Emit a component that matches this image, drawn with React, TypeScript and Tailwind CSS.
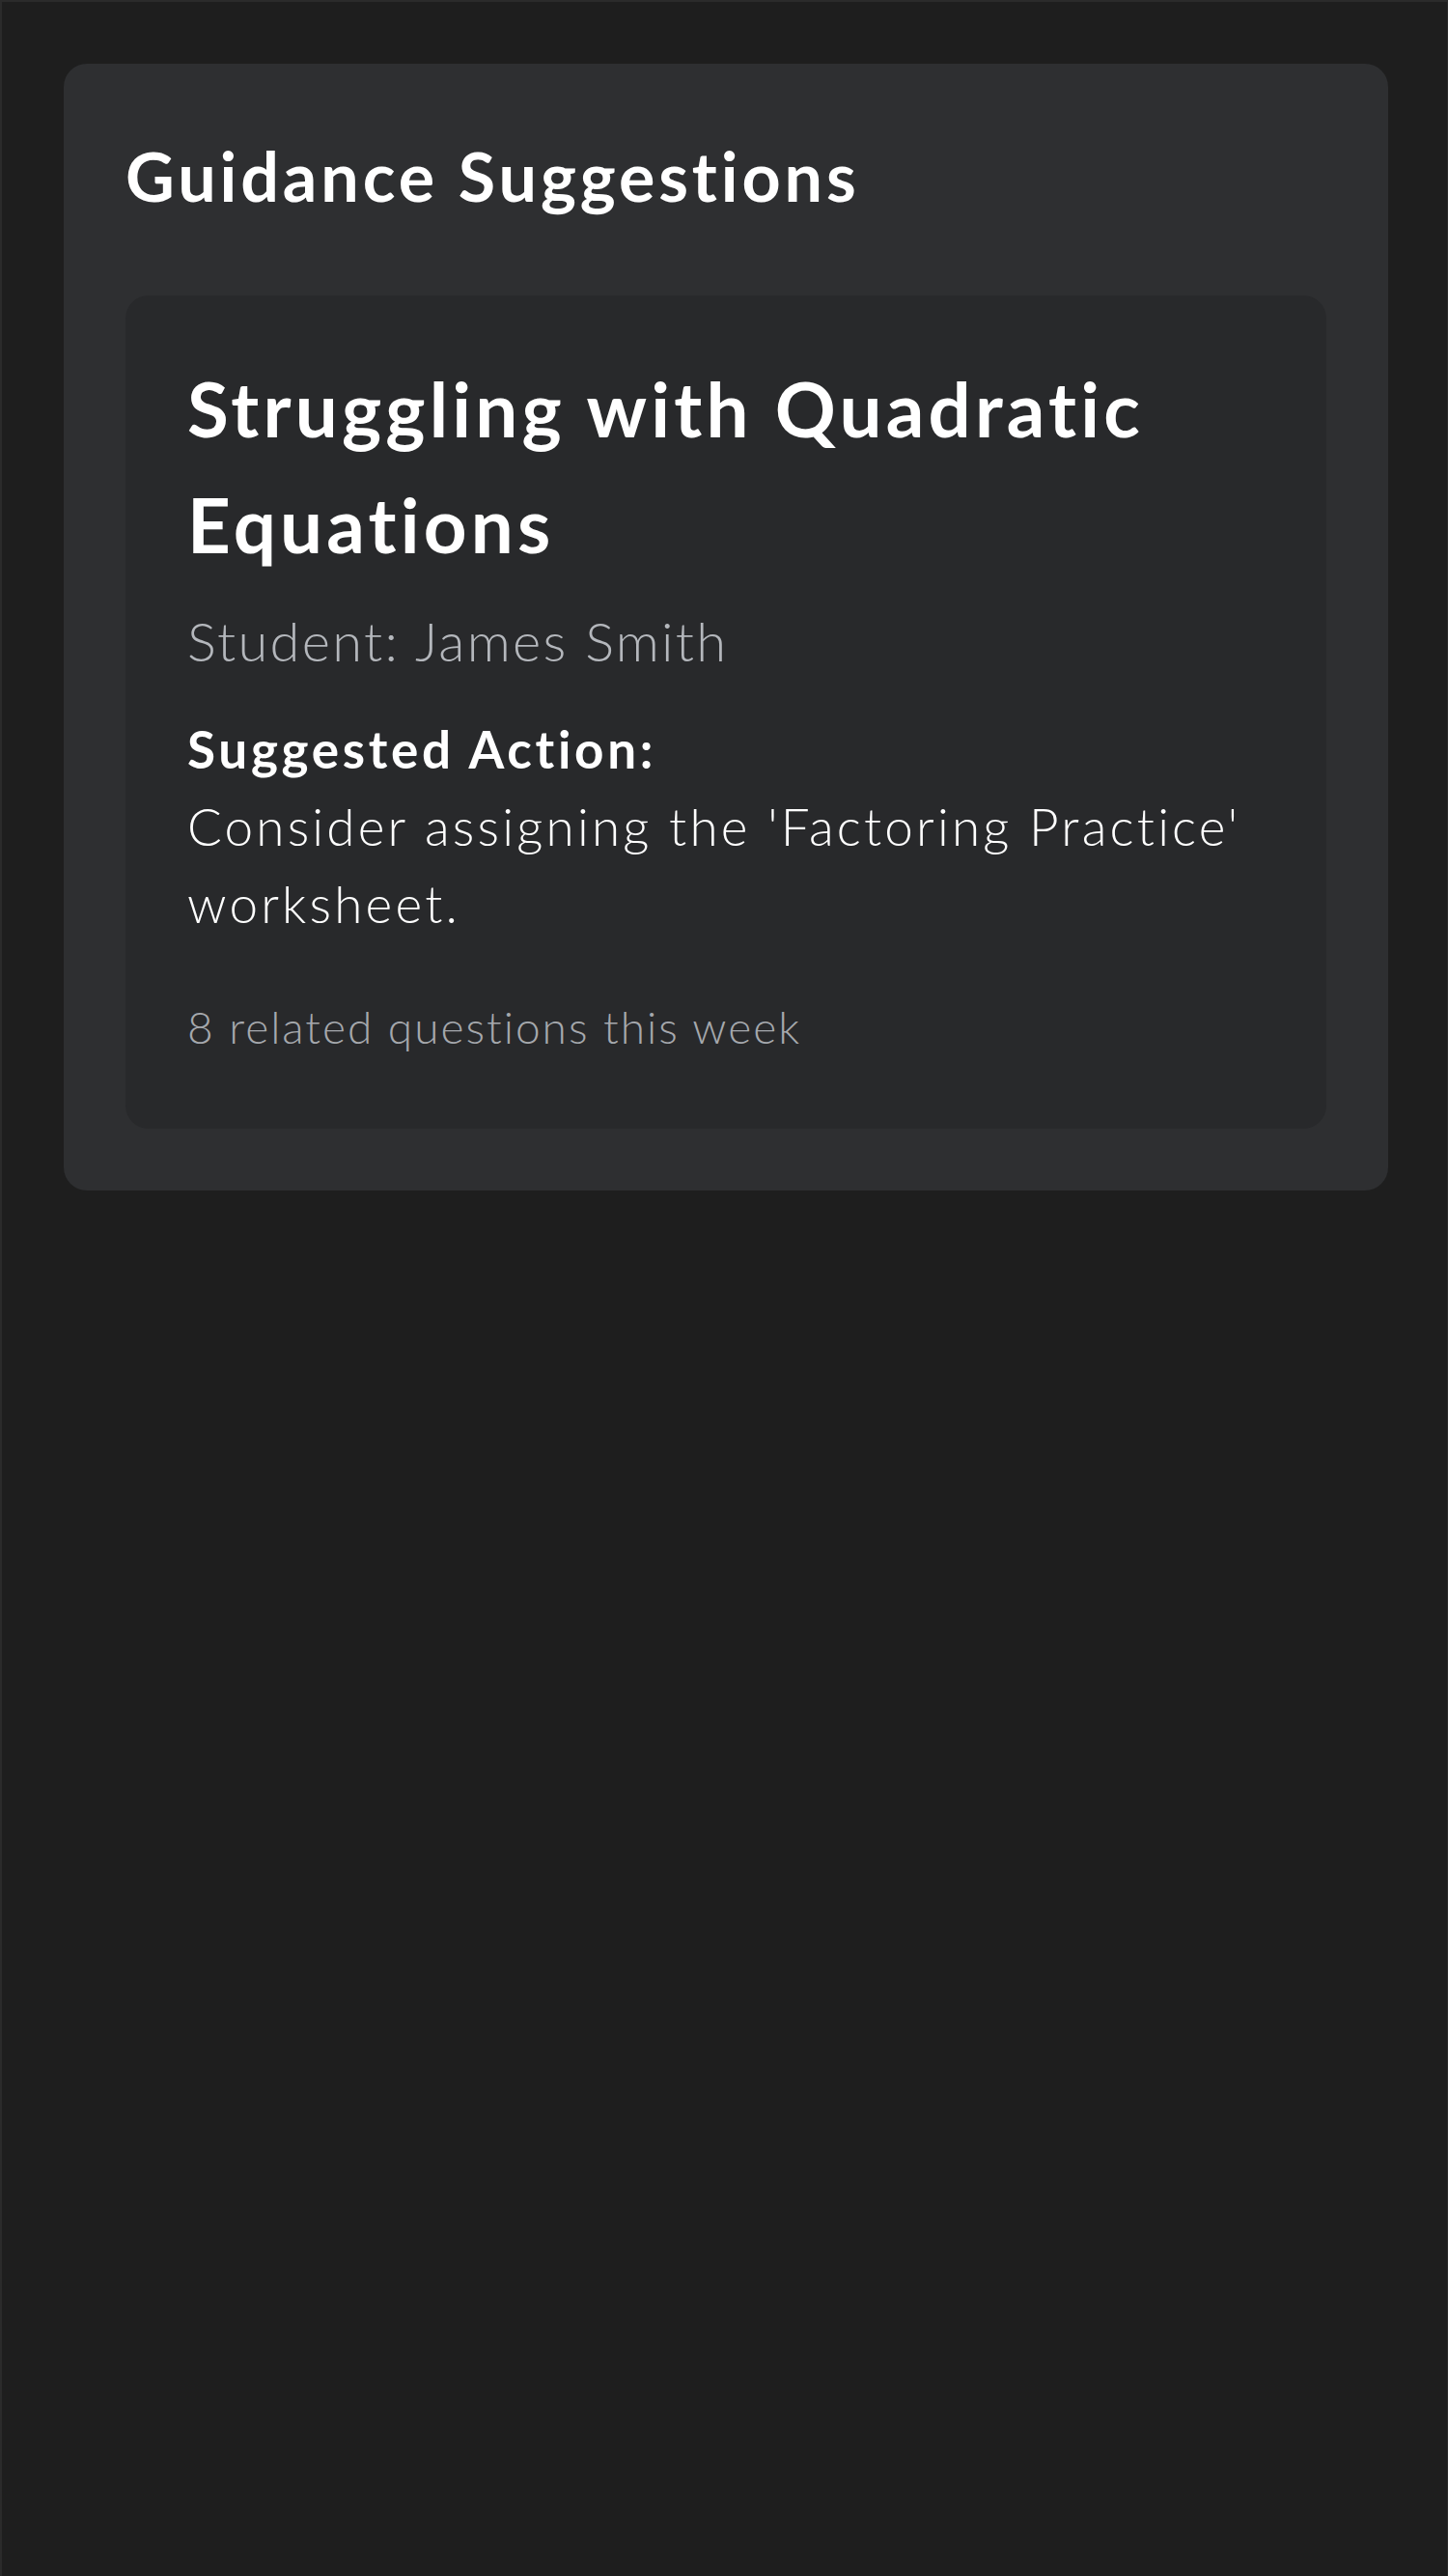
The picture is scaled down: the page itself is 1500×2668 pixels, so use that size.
type Suggestion = {
  topic: string;
  student: string;
  action: string;
  related: number;
};

const suggestions: Suggestion[] = [
  {
    topic: "Struggling with Quadratic Equations",
    student: "James Smith",
    action: "Consider assigning the 'Factoring Practice' worksheet.",
    related: 8,
  },
];

function SuggestionCard({ item }: { item: Suggestion }) {
  return (
    <div className="rounded-3xl bg-[#28292b] px-16 pt-[57px] pb-[71px]">
      <h3 className="text-[78px] font-bold leading-[120px] tracking-[4.2px] text-white">
        {item.topic}
      </h3>
      <p className="mt-[19px] text-[56px] font-light leading-[84px] tracking-[2.3px] text-[#b4b7bc]">
        Student: {item.student}
      </p>
      <p className="mt-[30px] text-[53px] font-light leading-[80px] tracking-[3.2px] text-white">
        <strong className="font-bold tracking-[3.7px]">Suggested Action:</strong>
        <br />
        {item.action}
      </p>
      <p className="mt-[53px] text-[46px] font-light leading-[69px] tracking-[2px] text-[#a5a8ad]">
        {item.related} related questions this week
      </p>
    </div>
  );
}

export default function App() {
  return (
    <div
      className="min-h-screen border-t-2 border-l-2 border-r border-[#2b2b2b] bg-[#1e1e1e] pt-16 pl-16 pr-[61px] [font-variant-ligatures:none]"
      style={{ fontFamily: "Lato, 'Noto Sans', sans-serif" }}
    >
      <section className="rounded-3xl bg-[#2e2f31] p-16">
        <h2 className="mb-[71px] text-[70px] font-bold leading-[105px] tracking-[3.9px] text-white">
          Guidance Suggestions
        </h2>
        <div className="flex flex-col gap-8">
          {suggestions.map((s) => (
            <SuggestionCard key={s.topic} item={s} />
          ))}
        </div>
      </section>
    </div>
  );
}
